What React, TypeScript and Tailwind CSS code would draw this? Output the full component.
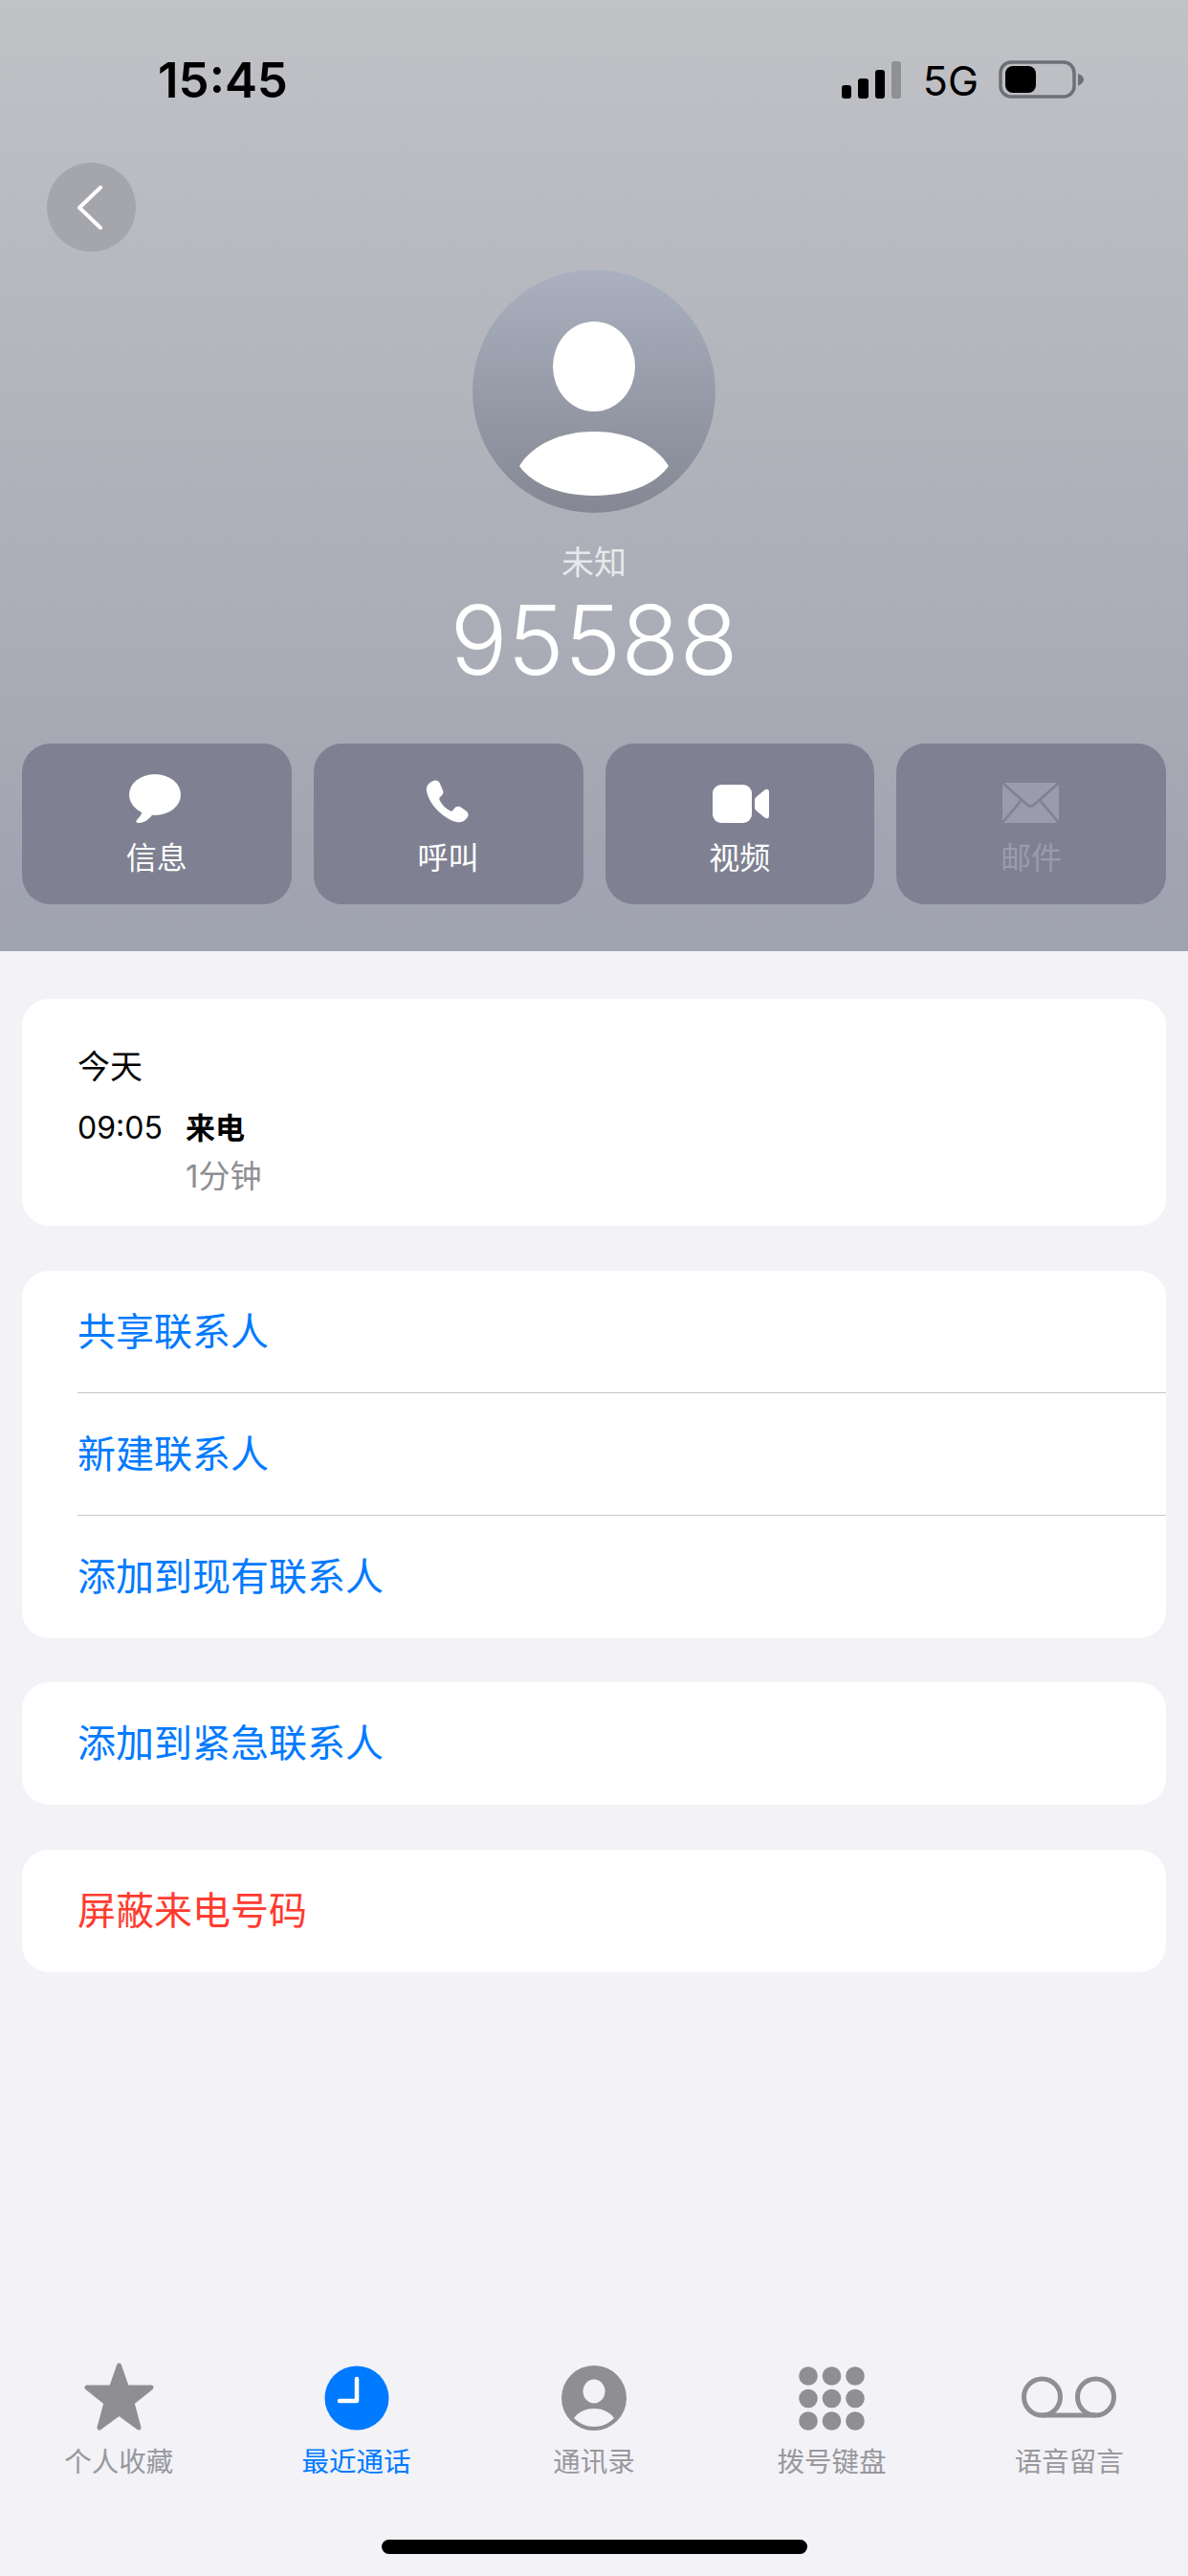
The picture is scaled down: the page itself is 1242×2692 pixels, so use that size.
import React from "react";

function Message() {
  return (
    <svg width="54" height="51" viewBox="0 0 54 51" fill="#fff" className="mr-[3px]">
      <ellipse cx="27" cy="21.5" rx="27" ry="21.5" />
      <path d="M14 36 C14 41 11 45 8 48 C6.5 50 8 51 10 51 C15 51 20 48 24 43 Z" />
    </svg>
  );
}
function Phone() {
  return (
    <svg width="45" height="45" viewBox="0 0 45 45" fill="#fff" className="mr-[3px]">
      <path d="M8 1 C11 -0.5 14 1 15 4 L18 11 C19 14 18 16 15 18 C14 19 14 20 15 22 C18 27 21 30 25 32 C27 33 28 33 29 31 C31 28 33 27 36 28 L43 33 C45 35 45 38 43 40 C40 44 36 45 32 44 C20 41 4 27 1 12 C0 7 3 3 8 1 Z" />
    </svg>
  );
}
function Video() {
  return (
    <svg width="59" height="40" viewBox="0 0 59 40" fill="#fff" className="ml-[2px]">
      <rect x="0" y="0" width="41" height="40" rx="9" />
      <path d="M44 16 C44 14.5 45 13.5 46 12.5 L54.5 5.5 C56.5 4 59 4.5 59 7.5 V32.5 C59 35.5 56.5 36 54.5 34.5 L46 27.5 C45 26.5 44 25.5 44 24 Z" />
    </svg>
  );
}
function Mail() {
  return (
    <svg width="59" height="42" viewBox="0 0 59 42" className="mr-[2px]">
      <rect width="59" height="42" rx="2" fill="#9a9cac" />
      <path d="M0 0 L26 23 Q29.5 26 33 23 L59 0 M0 42 L20 18 M59 42 L39 18" fill="none" stroke="#7f8192" strokeWidth="2.5" />
    </svg>
  );
}
function Star() {
  return (
    <svg width="73" height="71" viewBox="0 0 73 71" fill="#8e8e93" stroke="#8e8e93" strokeWidth="5" strokeLinejoin="round">
      <path d="M36.5 3 L44.5 26 L70 26 L50 42 L57 68 L36.5 53 L16 68 L23 42 L3 26 L28.5 26 Z" />
    </svg>
  );
}
function Clock() {
  return (
    <svg width="68" height="68" viewBox="0 0 68 68">
      <circle cx="34" cy="34" r="33.5" fill="#007aff" />
      <path d="M34 14 V37 H16" fill="none" stroke="#fff" strokeWidth="4.5" strokeLinecap="round" strokeLinejoin="round" />
    </svg>
  );
}
function Contact() {
  return (
    <svg width="68" height="68" viewBox="0 0 68 68">
      <circle cx="34" cy="34" r="34" fill="#8e8e93" />
      <ellipse cx="34" cy="27" rx="11.5" ry="12.5" fill="#f2f2f7" />
      <path d="M13 55 C18 48 26 45 34 45 C42 45 50 48 55 55 C49 61 42 64 34 64 C26 64 19 61 13 55 Z" fill="#f2f2f7" />
    </svg>
  );
}
function Keypad() {
  const xs = [10, 34.5, 59];
  const ys = [10, 33.5, 57];
  return (
    <svg width="69" height="67" viewBox="0 0 69 67" fill="#8e8e93">
      {ys.map((y) => xs.map((x) => <circle key={`${x}-${y}`} cx={x} cy={y} r="9.8" />))}
    </svg>
  );
}
function Voicemail() {
  return (
    <svg width="99" height="44" viewBox="0 0 99 44" fill="none" stroke="#8e8e93" strokeWidth="5">
      <circle cx="21.5" cy="22" r="19" />
      <circle cx="77.5" cy="22" r="19" />
      <path d="M21.5 41 H77.5" />
    </svg>
  );
}

function Action({ icon, label, dim }: { icon: React.ReactNode; label: string; dim?: boolean }) {
  return (
    <div className="h-[168px] rounded-[30px] bg-[#7f8192] flex flex-col items-center">
      <div className="h-[83px] w-full flex items-end justify-center">{icon}</div>
      <div className={`mt-[17px] text-[32px] leading-[40px] ${dim ? "text-[#9a9cac]" : "text-white"}`}>{label}</div>
    </div>
  );
}

function Row({ label, red, divider }: { label: string; red?: boolean; divider?: boolean }) {
  return (
    <div className="pl-[58px]">
      <div className={`h-[128px] flex items-center text-[40px] ${divider ? "border-b border-[#c6c6c8]" : ""} ${red ? "text-[#ff3b30]" : "text-[#007aff]"}`}>
        {label}
      </div>
    </div>
  );
}

function Tab({ icon, label, active }: { icon: React.ReactNode; label: string; active?: boolean }) {
  return (
    <div className="flex flex-col items-center">
      <div className="h-[72px] flex items-end justify-center">{icon}</div>
      <div className={`mt-[15px] text-[28.5px] leading-[36px] ${active ? "text-[#007aff]" : "text-[#98989d]"}`}>{label}</div>
    </div>
  );
}

export default function App() {
  return (
    <div className="w-[1242px] h-[2692px] bg-[#f2f2f7] flex flex-col font-['Inter','Noto_Sans_CJK_SC',sans-serif]">
      <header className="h-[994px] shrink-0 flex flex-col bg-gradient-to-b from-[#c1c2c6] to-[#9fa2af]">
        <div className="mt-[54px] h-[60px] pl-[165px] pr-[109px] flex items-center justify-between">
          <span className="text-[51px] leading-[60px] font-semibold text-black">15:45</span>
          <div className="flex items-center">
            <svg width="62" height="39" viewBox="0 0 62 39" className="mt-[-2px]">
              <rect x="0" y="25" width="10" height="14" rx="3" fill="#000" />
              <rect x="17" y="18" width="11" height="21" rx="3" fill="#000" />
              <rect x="35" y="9" width="10" height="30" rx="3" fill="#000" />
              <rect x="52" y="0" width="10" height="39" rx="3" fill="#8f9094" />
            </svg>
            <span className="ml-[23px] text-[43px] leading-[60px] text-black">5G</span>
            <svg width="89" height="40" viewBox="0 0 89 40" className="ml-[21px] mt-[-2px]">
              <rect x="2" y="2" width="77" height="36" rx="11" fill="none" stroke="#6f7076" strokeWidth="3.5" />
              <rect x="7" y="6" width="32" height="28" rx="8" fill="#000" />
              <path d="M83 14 C86 15 89 17 89 20 C89 23 86 25 83 27 Z" fill="#6f7076" />
            </svg>
          </div>
        </div>

        <button className="mt-[56px] ml-[49px] w-[93px] h-[93px] rounded-full bg-[#a5a6ab] flex items-center justify-center">
          <svg width="28" height="46" viewBox="0 0 28 46" fill="none" stroke="#fff" strokeWidth="4" strokeLinecap="round" strokeLinejoin="round" className="mr-[4px]">
            <path d="M25 2 L3 23 L25 44" />
          </svg>
        </button>

        <div className="mt-[19px] self-center w-[254px] h-[254px] rounded-full bg-gradient-to-b from-[#aab0bf] to-[#858894] flex flex-col items-center">
          <div className="mt-[54px] w-[86px] h-[94px] rounded-[50%] bg-white" />
          <svg width="156" height="67" viewBox="0 0 156 67" className="mt-[21px]" fill="#fff">
            <path d="M0 36 C14 13 44 0 78 0 C112 0 142 13 156 36 C142 56 112 67 78 67 C44 67 14 56 0 36 Z" />
          </svg>
        </div>

        <div className="mt-[32px] text-center text-[34px] leading-[40px] text-[#e8e9ec]">未知</div>
        <div className="mt-[6px] text-center text-[100px] leading-[110px] font-light text-white">95588</div>

        <div className="mt-[53px] px-[23px] grid grid-cols-4 gap-[23px]">
          <Action icon={<Message />} label="信息" />
          <Action icon={<Phone />} label="呼叫" />
          <Action icon={<Video />} label="视频" />
          <Action icon={<Mail />} label="邮件" dim />
        </div>
      </header>

      <main className="mt-[50px] px-[23px] flex flex-col">
        <section className="h-[237px] rounded-[28px] bg-white pl-[58px] pt-[49px]">
          <div className="text-[34px] leading-[44px] text-black">今天</div>
          <div className="mt-[20px] flex items-center h-[44px]">
            <span className="w-[113px] text-[32px] leading-[44px] text-black">09:05</span>
            <span className="text-[31px] leading-[44px] font-bold text-black">来电</span>
          </div>
          <div className="mt-[6px] ml-[113px] text-[33px] leading-[44px] text-[#8e8e93]">1分钟</div>
        </section>

        <section className="mt-[47px] rounded-[28px] bg-white overflow-hidden">
          <Row label="共享联系人" divider />
          <Row label="新建联系人" divider />
          <Row label="添加到现有联系人" />
        </section>

        <section className="mt-[46px] rounded-[28px] bg-white">
          <Row label="添加到紧急联系人" />
        </section>

        <section className="mt-[47px] rounded-[28px] bg-white">
          <Row label="屏蔽来电号码" red />
        </section>
      </main>

      <nav className="mt-auto">
        <div className="grid grid-cols-5">
          <Tab icon={<Star />} label="个人收藏" />
          <Tab icon={<Clock />} label="最近通话" active />
          <Tab icon={<Contact />} label="通讯录" />
          <Tab icon={<Keypad />} label="拨号键盘" />
          <Tab icon={<div className="mb-[13px]"><Voicemail /></div>} label="语音留言" />
        </div>
        <div className="mt-[63px] mb-[23px] mx-auto w-[445px] h-[15px] rounded-full bg-black" />
      </nav>
    </div>
  );
}
